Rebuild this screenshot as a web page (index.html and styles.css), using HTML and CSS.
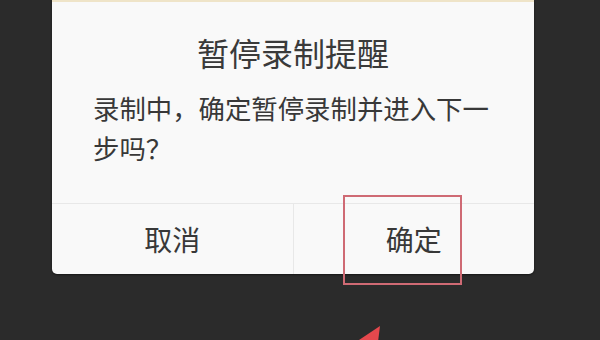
FILE: index.html
```html
<!DOCTYPE html>
<html>
<head>
	<meta name="viewport" content="width=device-width, initial-scale=1.0">
	<title>暂停录制提醒</title>
	<link rel="stylesheet" href="styles.css">
</head>
<body>
	<div class="screen">
		<div class="dialog">
			<h2 class="dialog-title">暂停录制提醒</h2>
			<p class="dialog-msg">录制中，确定暂停录制并进入下一步吗？</p>
			<div class="dialog-actions">
				<button class="btn">取消</button>
				<button class="btn">确定</button>
			</div>
		</div>
		<div class="mark"></div>
		<svg class="arrow" width="30" height="16" viewBox="0 0 30 16">
			<polygon points="24,0 3,14 8,16 22,16" fill="#e5484d"/>
		</svg>
	</div>
</body>
</html>
```

FILE: styles.css
```css
html, body {
	margin: 0;
	padding: 0;
	background: #2b2b2b;
}
.screen {
	position: relative;
	width: 600px;
	height: 340px;
	overflow: hidden;
	font-family: "Noto Sans CJK SC", "Noto Sans", sans-serif;
}
.dialog {
	width: 482px;
	margin-left: 52px;
	background: #f9f9f9;
	border-top: 2px solid #efe4c8;
	border-radius: 0 0 5px 5px;
	box-shadow: 0 1px 2px rgba(0, 0, 0, 0.5);
}
.dialog-title {
	margin: 0;
	padding-top: 30px;
	font-size: 32px;
	line-height: 40px;
	font-weight: normal;
	text-align: center;
	color: #3a3a3a;
}
.dialog-msg {
	margin: 16px 0 0;
	padding: 0 40px 0 41px;
	font-size: 26.4px;
	line-height: 40px;
	color: #383838;
}
.dialog-actions {
	display: flex;
	margin-top: 35px;
	border-top: 1px solid #e8e8e8;
}
.btn {
	flex: 1;
	height: 70px;
	padding: 0;
	border: none;
	background: none;
	font-family: inherit;
	font-size: 28px;
	color: #383838;
}
.btn + .btn {
	border-left: 1px solid #e8e8e8;
}
.mark {
	position: absolute;
	left: 343px;
	top: 195px;
	width: 115px;
	height: 86px;
	border: 2px solid #cf6a74;
}
.arrow {
	position: absolute;
	left: 356px;
	top: 326px;
}
```
